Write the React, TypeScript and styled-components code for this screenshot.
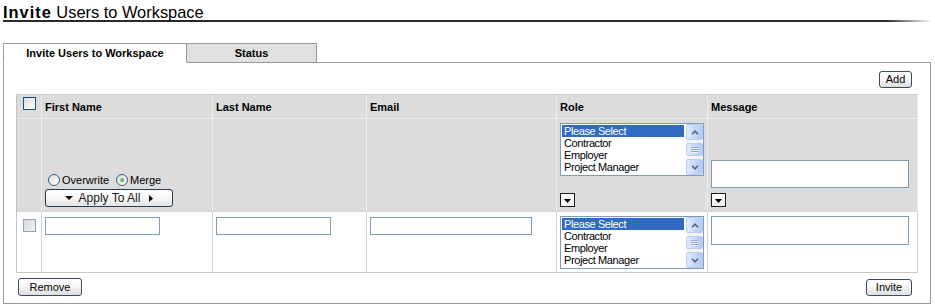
import React from "react";
import styled, { createGlobalStyle } from "styled-components";

const FONT = `Tahoma, "Liberation Sans", Arial, sans-serif`;

const GlobalStyle = createGlobalStyle`
  html, body { margin: 0; padding: 0; background: #fff; }
  body { font-family: ${FONT}; font-size: 11px; color: #000; }
`;

const Page = styled.div`
  width: 928px;
  padding: 0 4px 0 3px;
`;

const Title = styled.h1`
  margin: 0;
  padding-top: 4px;
  height: 16px;
  line-height: 16px;
  font-size: 16.4px;
  font-weight: normal;
  white-space: nowrap;
  border-bottom: 2px solid #333;
  border-image: linear-gradient(to right, #2a2a2a 0%, #2a2a2a 95%, rgba(255, 255, 255, 0) 100%) 1;
`;

const TitleStrong = styled.strong`
  letter-spacing: 1px;
`;

const TabBar = styled.div`
  display: flex;
  margin-top: 21px;
  height: 20px;
`;

const Tab = styled.div<{ $active?: boolean; $w: number }>`
  box-sizing: border-box;
  width: ${(p) => p.$w}px;
  height: 20px;
  line-height: 18px;
  text-align: center;
  font-weight: bold;
  border-top: 1px solid #999;
  border-right: 1px solid #999;
  border-left: ${(p) => (p.$active ? "1px solid #999" : "none")};
  border-bottom: 1px solid ${(p) => (p.$active ? "#fff" : "#999")};
  background: ${(p) => (p.$active ? "#fff" : "#e0e0e0")};
`;

const TabFiller = styled.div`
  flex: 1;
  border-bottom: 1px solid #999;
`;

const Panel = styled.div`
  border: 1px solid #999;
  border-top: none;
  padding: 8px 12px 7px;
  display: flex;
  flex-direction: column;
`;

const TopBar = styled.div`
  display: flex;
  justify-content: flex-end;
  padding-right: 6px;
  margin-bottom: 6px;
`;

const BottomBar = styled.div`
  display: flex;
  justify-content: space-between;
  align-items: flex-end;
  padding: 0 6px 0 2px;
  margin-top: 5px;
`;

const Button = styled.button<{ $w: number; $h?: number }>`
  box-sizing: border-box;
  width: ${(p) => p.$w}px;
  height: ${(p) => p.$h ?? 17}px;
  padding: 0;
  margin: 0;
  border: 1px solid #3d4b5a;
  border-radius: 3px;
  background: linear-gradient(#ffffff, #f6f6f6 45%, #dedede);
  font-family: ${FONT};
  font-size: 11px;
  line-height: 15px;
  color: #000;
`;

const Grid = styled.table`
  border-collapse: separate;
  border-spacing: 0;
  table-layout: fixed;
  width: 902px;
  border-top: 1px solid #cfcfcf;
  border-left: 1px solid #c4c4c4;
`;

const Th = styled.th`
  box-sizing: border-box;
  height: 24px;
  padding: 0 3px;
  text-align: left;
  vertical-align: middle;
  font-weight: bold;
  font-size: 11px;
  background: #dcdcdc;
  border-right: 1px solid #ececec;
  border-bottom: 1px solid #ececec;
  white-space: nowrap;
`;

const CheckTh = styled(Th)`
  padding: 2px 0 0;
  vertical-align: top;
`;

const Td = styled.td<{ $gray?: boolean; $bottom?: boolean; $pb?: number }>`
  padding: 4px 3px ${(p) => p.$pb ?? 4}px;
  vertical-align: ${(p) => (p.$bottom ? "bottom" : "top")};
  background: ${(p) => (p.$gray ? "#dcdcdc" : "#fff")};
  border-right: 1px solid ${(p) => (p.$gray ? "#ececec" : "#d2d2d2")};
  border-bottom: 1px solid ${(p) => (p.$gray ? "#d6d6d6" : "#c8c8c8")};
`;

const CheckTd = styled(Td)`
  padding: 7px 0 0;
`;

const Check = styled.span<{ $muted?: boolean }>`
  display: block;
  box-sizing: border-box;
  width: 13px;
  height: 13px;
  margin: 0 auto;
  border: 1px solid ${(p) => (p.$muted ? "#8fa2b8" : "#1c5180")};
  background: ${(p) =>
    p.$muted
      ? "linear-gradient(135deg, #d9d9d9, #f2f2f2)"
      : "linear-gradient(135deg, #dcdcd7, #ffffff)"};
`;

const TextInput = styled.input<{ $w: number }>`
  display: block;
  box-sizing: border-box;
  width: ${(p) => p.$w}px;
  height: 18px;
  margin: 1px 0 0;
  padding: 0 2px;
  border: 1px solid #7f9db9;
  background: #fff;
  font-family: ${FONT};
  font-size: 11px;
`;

const TextArea = styled.textarea<{ $h: number }>`
  display: block;
  box-sizing: border-box;
  width: 198px;
  height: ${(p) => p.$h}px;
  margin: 0;
  padding: 1px 2px;
  border: 1px solid #7f9db9;
  background: #fff;
  resize: none;
  font-family: ${FONT};
  font-size: 11px;
`;

const Stack = styled.div<{ $gap: number }>`
  display: flex;
  flex-direction: column;
  align-items: flex-start;
  gap: ${(p) => p.$gap}px;
`;

const ListBox = styled.div`
  box-sizing: border-box;
  width: 144px;
  height: 53px;
  border: 1px solid #7f9db9;
  background: #fff;
  display: flex;
`;

const ListItems = styled.div`
  flex: 1;
  padding: 1px 2px 1px 1px;
  overflow: hidden;
`;

const ListItem = styled.div<{ $selected?: boolean }>`
  height: 12px;
  line-height: 12px;
  padding-left: 2px;
  white-space: nowrap;
  font-size: 11px;
  letter-spacing: -0.4px;
  background: ${(p) => (p.$selected ? "#316ac5" : "transparent")};
  color: ${(p) => (p.$selected ? "#fff" : "#000")};
`;

const ScrollBar = styled.div`
  width: 17px;
  display: flex;
  flex-direction: column;
  justify-content: space-between;
  align-items: center;
  background: #f4f4f0;
`;

const ScrollBtn = styled.div`
  box-sizing: border-box;
  width: 17px;
  height: 16px;
  border: 1px solid #bccdf5;
  border-radius: 2px;
  background: linear-gradient(90deg, #e2eafd, #c3d3f9 60%, #b5c8f6);
  display: flex;
  align-items: center;
  justify-content: center;
`;

const ScrollThumb = styled(ScrollBtn)`
  height: 13px;
  flex-direction: column;
  gap: 1px;
`;

const Grip = styled.span`
  display: block;
  width: 7px;
  height: 1px;
  background: #8ea5dd;
  box-shadow: 0 1px 0 #eef3ff;
`;

const DropBtn = styled.div`
  box-sizing: border-box;
  width: 15px;
  height: 14px;
  border: 1px solid #1e1e1e;
  background: linear-gradient(#ffffff, #f1f1f1);
  display: flex;
  align-items: center;
  justify-content: center;
  padding-top: 2px;
`;

const RadioRow = styled.div`
  display: flex;
  align-items: center;
  height: 13px;
  padding-left: 3px;
  margin-bottom: 3px;
  white-space: nowrap;
`;

const Radio = styled.span<{ $on?: boolean; $ml?: number }>`
  box-sizing: border-box;
  width: 12px;
  height: 12px;
  margin-left: ${(p) => p.$ml ?? 0}px;
  border-radius: 50%;
  border: 1px solid #3d6189;
  background: linear-gradient(135deg, #dcdcd7, #ffffff);
  display: flex;
  align-items: center;
  justify-content: center;
  &::after {
    content: "";
    display: ${(p) => (p.$on ? "block" : "none")};
    width: 4px;
    height: 4px;
    border-radius: 50%;
    background: radial-gradient(circle at 35% 35%, #7fdc7f, #21a121);
  }
`;

const RadioLabel = styled.span`
  margin-left: 2px;
  font-size: 11px;
`;

const ApplyButton = styled.button`
  box-sizing: border-box;
  width: 128px;
  height: 18px;
  padding: 0;
  margin: 0;
  border: 1px solid #2b3b4e;
  border-radius: 3px;
  background: linear-gradient(#ffffff, #f7f7f7 50%, #e4e4e4);
  display: flex;
  align-items: center;
  justify-content: center;
  gap: 6px;
  font-family: ${FONT};
  font-size: 12px;
  color: #1a1a1a;
`;

const ApplyText = styled.span`
  margin-right: 3px;
`;

const TriDown = ({ w = 8, h = 4 }: { w?: number; h?: number }) => (
  <svg width={w} height={h} viewBox={`0 0 ${w} ${h}`}>
    <path d={`M0 0 H${w} L${w / 2} ${h} Z`} fill="#000" />
  </svg>
);

const TriRight = () => (
  <svg width={4} height={7} viewBox="0 0 4 7">
    <path d="M0 0 L4 3.5 L0 7 Z" fill="#000" />
  </svg>
);

const Chevron = ({ up }: { up?: boolean }) => (
  <svg width={8} height={5} viewBox="0 0 8 5">
    <path
      d={up ? "M1 4.2 L4 1.2 L7 4.2" : "M1 0.8 L4 3.8 L7 0.8"}
      fill="none"
      stroke="#4d6185"
      strokeWidth={1.6}
    />
  </svg>
);

const roles = ["Please Select", "Contractor", "Employer", "Project Manager"];

const RoleList = () => (
  <ListBox>
    <ListItems>
      {roles.map((r, i) => (
        <ListItem key={r} $selected={i === 0}>
          {r}
        </ListItem>
      ))}
    </ListItems>
    <ScrollBar>
      <ScrollBtn>
        <Chevron up />
      </ScrollBtn>
      <ScrollThumb>
        <Grip />
        <Grip />
        <Grip />
      </ScrollThumb>
      <ScrollBtn>
        <Chevron />
      </ScrollBtn>
    </ScrollBar>
  </ListBox>
);

const Drop = () => (
  <DropBtn>
    <TriDown w={7} h={4} />
  </DropBtn>
);

export default function App() {
  return (
    <>
      <GlobalStyle />
      <Page>
        <Title>
          <TitleStrong>Invite</TitleStrong> Users to Workspace
        </Title>
        <TabBar>
          <Tab $active $w={184}>
            Invite Users to Workspace
          </Tab>
          <Tab $w={130}>Status</Tab>
          <TabFiller />
        </TabBar>
        <Panel>
          <TopBar>
            <Button $w={33}>Add</Button>
          </TopBar>
          <Grid>
            <colgroup>
              <col style={{ width: 25 }} />
              <col style={{ width: 171 }} />
              <col style={{ width: 154 }} />
              <col style={{ width: 190 }} />
              <col style={{ width: 151 }} />
              <col style={{ width: 210 }} />
            </colgroup>
            <thead>
              <tr>
                <CheckTh>
                  <Check />
                </CheckTh>
                <Th>First Name</Th>
                <Th>Last Name</Th>
                <Th>Email</Th>
                <Th>Role</Th>
                <Th>Message</Th>
              </tr>
            </thead>
            <tbody>
              <tr>
                <Td $gray />
                <Td $gray $bottom>
                  <RadioRow>
                    <Radio />
                    <RadioLabel>Overwrite</RadioLabel>
                    <Radio $on $ml={7} />
                    <RadioLabel>Merge</RadioLabel>
                  </RadioRow>
                  <ApplyButton>
                    <TriDown />
                    <ApplyText>Apply To All</ApplyText>
                    <TriRight />
                  </ApplyButton>
                </Td>
                <Td $gray />
                <Td $gray />
                <Td $gray $bottom>
                  <Stack $gap={17}>
                    <RoleList />
                    <Drop />
                  </Stack>
                </Td>
                <Td $gray $bottom>
                  <Stack $gap={5}>
                    <TextArea $h={28} />
                    <Drop />
                  </Stack>
                </Td>
              </tr>
              <tr>
                <CheckTd>
                  <Check $muted />
                </CheckTd>
                <Td $pb={3}>
                  <TextInput $w={115} />
                </Td>
                <Td $pb={3}>
                  <TextInput $w={115} />
                </Td>
                <Td $pb={3}>
                  <TextInput $w={162} />
                </Td>
                <Td $pb={3}>
                  <RoleList />
                </Td>
                <Td $pb={3}>
                  <TextArea $h={29} />
                </Td>
              </tr>
            </tbody>
          </Grid>
          <BottomBar>
            <Button $w={64} $h={18}>
              Remove
            </Button>
            <Button $w={46}>Invite</Button>
          </BottomBar>
        </Panel>
      </Page>
    </>
  );
}
